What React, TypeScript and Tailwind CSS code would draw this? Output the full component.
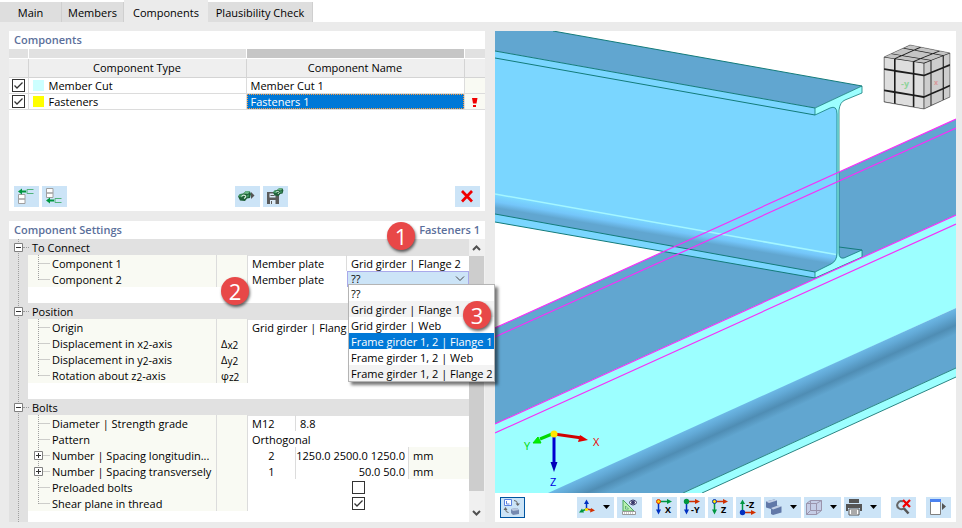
import { useState } from "react";
import type { ReactNode } from "react";

const tabs = [
  { name: "Main", width: "w-[62px]" },
  { name: "Members", width: "w-[62px]" },
  { name: "Components", width: "w-[84px]" },
  { name: "Plausibility Check", width: "w-[105px]" },
];

const componentRows = [
  { type: "Member Cut", name: "Member Cut 1", swatch: "bg-[#ccffff]", warn: false },
  { type: "Fasteners", name: "Fasteners 1", swatch: "bg-[#ffff00]", warn: true },
];

const plateOptions = [
  "??",
  "Grid girder | Flange 1",
  "Grid girder | Web",
  "Frame girder 1, 2 | Flange 1",
  "Frame girder 1, 2 | Web",
  "Frame girder 1, 2 | Flange 2",
];

type Point = [number, number];

function CheckBox({ label, initial }: { label: string; initial: boolean }) {
  const [checked, setChecked] = useState(initial);
  return (
    <label className="relative block h-[13px] w-[13px]">
      <input
        type="checkbox"
        aria-label={label}
        checked={checked}
        onChange={(e) => setChecked(e.target.checked)}
        className="block h-[13px] w-[13px] appearance-none border border-[#333] bg-white"
      />
      {checked && (
        <svg viewBox="0 0 13 13" className="pointer-events-none absolute inset-0 h-[13px] w-[13px]">
          <path d="M2.5 6.5 5 9l5.5-5.5" fill="none" stroke="#333" strokeWidth="1.3" />
        </svg>
      )}
    </label>
  );
}

function IconButton({
  label,
  children,
  active,
  menu,
}: {
  label: string;
  children: ReactNode;
  active?: boolean;
  menu?: boolean;
}) {
  return (
    <button
      type="button"
      aria-label={label}
      title={label}
      className={`flex h-[21px] shrink-0 items-center bg-[#cce4f7] hover:bg-[#b8d9f3] ${
        active ? "outline outline-1 -outline-offset-1 outline-[#0054a0]" : ""
      }`}
    >
      <svg viewBox="0 0 25 21" className="h-[21px] w-[25px]">
        {children}
      </svg>
      {menu && (
        <svg viewBox="0 0 12 21" className="h-[21px] w-3">
          <path d="M1 8h7L4.500 12z" fill="#000" />
        </svg>
      )}
    </button>
  );
}

function NutShape() {
  return (
    <g>
      <path d="M0 5.500 2 3l3-.5L8 0l4 .5L13 3l-1 4-3 .5L7 10l-5-.5z" fill="#1f5f38" />
      <path d="m5 2.500 3-2.500 4 .5L10 3z" fill="#6bb586" />
      <path d="m0 5.500 2-2.500 3 .5-1 3z" fill="#3f9460" />
      <path d="M3.500 5.500Q5 3.500 7 4.500T6 7.500" fill="none" stroke="#d5eedc" strokeWidth="1.200" />
      <path d="m9 4 2-.5v2l-2 1z" fill="#3f9460" />
    </g>
  );
}

/* Two coloured arrows from one origin, used by the view direction buttons */
function AxisIcon({
  label,
  down,
  right,
  up,
}: {
  label: string;
  down: string;
  right: string;
  up?: boolean;
}) {
  const y = up ? 15.5 : 4.5;
  return (
    <>
      {up ? (
        <>
          <path d="M6.500 15V6" stroke={down} strokeWidth="1.500" />
          <path d="M6.500 2.500 9 7H4z" fill={down} />
        </>
      ) : (
        <>
          <path d="M6.500 5v8" stroke={down} strokeWidth="1.500" />
          <path d="M6.500 17.500 9 12.500H4z" fill={down} />
        </>
      )}
      <path d={`M7 ${y}h9`} stroke={right} strokeWidth="1.500" />
      <path d={`M20 ${y}l-5-2.500v5z`} fill={right} />
      <text
        x={up ? 10 : label.length > 1 ? 11 : 13}
        y={up ? 11 : 16}
        fontSize="9"
        fontWeight="700"
        fontFamily="Open Sans, sans-serif"
      >
        {label}
      </text>
    </>
  );
}

function ComponentsPanel() {
  return (
    <section className="flex min-h-[180px] flex-col bg-white">
      <h2 className="h-[18px] px-[5px] leading-[18px] font-semibold text-[#5b6f9b]">Components</h2>
      <table className="w-full table-fixed border-collapse">
        <colgroup>
          <col className="w-[19px]" />
          <col />
          <col />
          <col className="w-[21px]" />
        </colgroup>
        <thead>
          <tr className="h-[9px] border-b border-white bg-[#e1e1e1]">
            <td className="border-r border-white" />
            <td className="border-r border-white" />
            <td className="border-r border-white bg-[#c6c6c6]" />
            <td />
          </tr>
          <tr className="h-[19px] border-b border-[#d4d4d4] bg-[#efefef]">
            <th className="border-r border-[#d4d4d4]" />
            <th className="border-r border-[#d4d4d4] p-0 font-normal">Component Type</th>
            <th className="border-r border-[#d4d4d4] p-0 font-normal">Component Name</th>
            <th />
          </tr>
        </thead>
        <tbody>
          {componentRows.map((row) => (
            <tr key={row.name} className="h-[16px] border-b border-[#dcdcdc]">
              <td className="border-r border-[#dcdcdc] p-0 pl-[3px]">
                <CheckBox label={row.type} initial />
              </td>
              <td className="border-r border-[#dcdcdc] p-0 leading-[15px]">
                <span className="flex items-center gap-[5px] pl-1">
                  <span className={`h-[11px] w-[11px] ${row.swatch}`} />
                  {row.type}
                </span>
              </td>
              <td className="border-r border-[#dcdcdc] p-0 leading-[15px]">
                {row.warn ? (
                  <div className="h-[15px] bg-[#0078d7] pl-1 text-white outline-1 -outline-offset-1 outline-dotted outline-[#ff9a3c]">
                    {row.name}
                  </div>
                ) : (
                  <div className="pl-1">{row.name}</div>
                )}
              </td>
              <td className="bg-[#f9faf3] p-0">
                {row.warn && (
                  <svg viewBox="0 0 20 15" className="h-[15px] w-5">
                    <path d="M7 4h5.500l-1 5.500h-3.500z" fill="#f00000" />
                    <path d="M8 11h3v2H8z" fill="#f00000" />
                  </svg>
                )}
              </td>
            </tr>
          ))}
        </tbody>
      </table>
      <div className="mt-auto flex justify-between px-[5px] pb-1">
        <div className="flex gap-[3px]">
          <IconButton label="Insert above">
            <path d="M4.500 8.500h6.500v4.500H4.500zM4.500 13h6.500v4.500H4.500z" fill="#fff" stroke="#a0a0a0" />
            <path d="M4 5.500 8 2.500v2h4v2H8v2z" fill="#00963f" />
            <path d="M19.500 3.500H13v4h6.500" fill="none" stroke="#4fb37a" />
          </IconButton>
          <IconButton label="Insert below">
            <path d="M4.500 2.500h6.500v4.500H4.500zM4.500 7h6.500v4.500H4.500z" fill="#fff" stroke="#a0a0a0" />
            <path d="M4 14.500 8 11.500v2h4v2H8v2z" fill="#00963f" />
            <path d="M19.500 12.500H13v4h6.500" fill="none" stroke="#4fb37a" />
          </IconButton>
        </div>
        <div className="flex gap-[3px]">
          <IconButton label="Load component">
            <g transform="translate(3 5)">
              <NutShape />
            </g>
            <path d="m16 6 3.500 3.500L16 13z" fill="#555" />
          </IconButton>
          <IconButton label="Save component">
            <path d="M4 6h10l2 2v10H4z" fill="#5a5a5a" />
            <path d="M6.500 7.500h6v4h-6zM7 14h5.500v4H7z" fill="#dcebf7" />
            <path d="M7.500 9.500h4M8.500 15v3" stroke="#5a5a5a" />
            <g transform="translate(10 2) scale(.8)">
              <NutShape />
            </g>
          </IconButton>
        </div>
        <IconButton label="Delete component">
          <path d="m7 5 10 10.500M17 5 7 15.500" stroke="#f00000" strokeWidth="2.700" />
        </IconButton>
      </div>
    </section>
  );
}

function Expander() {
  return (
    <svg viewBox="0 0 9 9" className="h-[9px] w-[9px]">
      <path d="M.5.5h8v8h-8z" fill="#fff" stroke="#808080" />
      <path d="M2 4.500h5" stroke="#333" />
    </svg>
  );
}

function GroupRow({ title }: { title: string }) {
  return (
    <div className="flex h-4 items-center pl-[5px]">
      <button type="button" aria-label={`Collapse ${title}`} className="relative">
        <Expander />
      </button>
      <span className="w-[6px] border-t border-dotted border-[#999]" />
      <h3 className="flex-1 bg-[#e1e1e1] pl-[3px]">{title}</h3>
    </div>
  );
}

function SettingRow({
  label,
  symbol,
  last,
  expandable,
  children,
}: {
  label: ReactNode;
  symbol?: ReactNode;
  last?: boolean;
  expandable?: boolean;
  children?: ReactNode;
}) {
  return (
    <div className="flex h-4">
      <div className="flex w-[189px] shrink-0 border-r border-[#dcdcdc] bg-[#f9faf3]">
        <svg viewBox="0 0 24 16" className="h-4 w-6 shrink-0">
          <path
            d={last ? "M10.500 0v9M10.500 8.500H22" : "M10.500 0v16M10.500 8.500H22"}
            fill="none"
            stroke="#a0a0a0"
            strokeDasharray="1 1"
          />
          {expandable && (
            <>
              <path d="M6.500 4.500h8v8h-8z" fill="#fff" stroke="#808080" />
              <path d="M8 8.500h5M10.500 6v5" stroke="#333" />
            </>
          )}
        </svg>
        <span className="whitespace-nowrap">{label}</span>
      </div>
      <div className="w-[31px] shrink-0 border-r border-[#dcdcdc] bg-[#f9faf3] pl-1 whitespace-nowrap">{symbol}</div>
      <div className="flex min-w-0 flex-1">{children}</div>
    </div>
  );
}

function Sub({ children }: { children: ReactNode }) {
  return <span className="relative top-px text-[10px]">{children}</span>;
}

function PlateSelect() {
  const [value, setValue] = useState("??");
  const [hovered, setHovered] = useState("Frame girder 1, 2 | Flange 1");
  return (
    <div className="relative min-w-0 flex-1">
      <select
        aria-label="Component 2 plate"
        value={value}
        onChange={(e) => setValue(e.target.value)}
        className="block h-4 w-full appearance-none border border-[#a9a9ea] bg-[#cce4f7] pl-[3px] leading-[14px]"
      >
        {plateOptions.map((o) => (
          <option key={o}>{o}</option>
        ))}
      </select>
      <svg viewBox="0 0 10 6" className="pointer-events-none absolute top-[5px] right-1 h-[6px] w-[10px]">
        <path d="m1 .5 4 4 4-4" fill="none" stroke="#444" />
      </svg>
      <ul
        role="listbox"
        aria-label="Plates"
        className="absolute top-[13px] left-px z-10 w-[147px] border border-[#b4b4b4] bg-white shadow-[3px_3px_3px_#0008]"
      >
        {plateOptions.map((o, i) => (
          <li
            key={o}
            role="option"
            aria-selected={o === value}
            onMouseEnter={() => setHovered(o)}
            onClick={() => setValue(o)}
            className={`h-4 pl-[2px] whitespace-nowrap ${
              o === hovered ? "bg-[#0078d7] text-white" : i % 2 ? "bg-[#f3f3f3]" : "bg-white"
            }`}
          >
            {o}
          </li>
        ))}
      </ul>
    </div>
  );
}

function SettingsPanel() {
  return (
    <section className="flex flex-1 flex-col bg-white">
      <div className="flex h-[18px] justify-between px-[5px] leading-[18px] font-semibold text-[#5b6f9b]">
        <h2>Component Settings</h2>
        <span>Fasteners 1</span>
      </div>
      <div className="flex flex-1">
        <div className="relative flex min-w-0 flex-1 flex-col gap-4 bg-[linear-gradient(to_right,#e1e1e1_19px,#fff_19px)] leading-[17px]">
          <div className="absolute inset-y-0 left-[9px] border-l border-dotted border-[#a0a0a0]" />
          <div>
            <div className="bg-[#e1e1e1]">
              <GroupRow title="To Connect" />
            </div>
            <div className="pl-[19px]">
              <SettingRow label="Component 1">
                <span className="w-[99px] shrink-0 border-r border-[#dcdcdc] pl-1">Member plate</span>
                <span className="pl-1 whitespace-nowrap">Grid girder | Flange 2</span>
              </SettingRow>
              <SettingRow label="Component 2" last>
                <span className="w-[99px] shrink-0 pl-1">Member plate</span>
                <PlateSelect />
              </SettingRow>
            </div>
          </div>
          <div>
            <div className="bg-[#e1e1e1]">
              <GroupRow title="Position" />
            </div>
            <div className="pl-[19px]">
              <SettingRow label="Origin">
                <span className="w-[99px] overflow-hidden pl-1 whitespace-nowrap">Grid girder | Flange 2</span>
              </SettingRow>
              <SettingRow label={<>Displacement in x<Sub>2</Sub>-axis</>} symbol={<>Δ<Sub>x2</Sub></>} />
              <SettingRow label={<>Displacement in y<Sub>2</Sub>-axis</>} symbol={<>Δ<Sub>y2</Sub></>} />
              <SettingRow label={<>Rotation about z<Sub>2</Sub>-axis</>} symbol={<>φ<Sub>z2</Sub></>} last />
            </div>
          </div>
          <div>
            <div className="bg-[#e1e1e1]">
              <GroupRow title="Bolts" />
            </div>
            <div className="pl-[19px]">
              <SettingRow label="Diameter | Strength grade">
                <span className="w-12 border-r border-[#dcdcdc] pl-1">M12</span>
                <span className="pl-1">8.8</span>
              </SettingRow>
              <SettingRow label="Pattern">
                <span className="pl-1">Orthogonal</span>
              </SettingRow>
              <SettingRow label="Number | Spacing longitudin..." expandable>
                <span className="w-12 shrink-0 border-r border-[#dcdcdc] text-center">2</span>
                <span className="w-[113px] shrink-0 border-r border-[#dcdcdc] pr-[3px] text-right whitespace-nowrap">
                  1250.0 2500.0 1250.0
                </span>
                <span className="flex-1 bg-[#f9faf3] pl-1">mm</span>
              </SettingRow>
              <SettingRow label="Number | Spacing transversely" expandable>
                <span className="w-12 shrink-0 border-r border-[#dcdcdc] text-center">1</span>
                <span className="w-[113px] shrink-0 border-r border-[#dcdcdc] pr-[3px] text-right">50.0 50.0</span>
                <span className="flex-1 bg-[#f9faf3] pl-1">mm</span>
              </SettingRow>
              <SettingRow label="Preloaded bolts">
                <div className="flex flex-1 items-center justify-center">
                  <CheckBox label="Preloaded bolts" initial={false} />
                </div>
              </SettingRow>
              <SettingRow label="Shear plane in thread" last>
                <div className="flex flex-1 items-center justify-center">
                  <CheckBox label="Shear plane in thread" initial />
                </div>
              </SettingRow>
            </div>
          </div>
        </div>
        <div className="flex w-4 shrink-0 flex-col items-center bg-[#f0f0f0]">
          <svg viewBox="0 0 16 17" className="h-[17px] w-4">
            <path d="m4 11 3.500-3.500L11 11" fill="none" stroke="#505050" strokeWidth="2" />
          </svg>
          <div className="mr-px mb-[14px] w-[15px] flex-1 bg-[#cdcdcd]" />
          <svg viewBox="0 0 16 17" className="h-[17px] w-4">
            <path d="m4 6 3.500 3.500L11 6" fill="none" stroke="#505050" strokeWidth="2" />
          </svg>
        </div>
      </div>
    </section>
  );
}

const cubeFaces: { quad: [Point, Point, Point, Point]; fill: string }[] = [
  { quad: [[884, 57], [910, 45], [950, 53], [924, 63]], fill: "#c4c4c4" },
  { quad: [[884, 57], [924, 63], [924, 109], [884, 102]], fill: "#dedede" },
  { quad: [[924, 63], [950, 53], [950, 97], [924, 109]], fill: "#cdcdcd" },
];

const cubeSteps: [number, number][] = [
  [0.01, 0.25],
  [0.29, 0.72],
  [0.76, 0.99],
];

function onQuad(q: Point[], u: number, v: number) {
  const at = (k: number) =>
    (1 - u) * (1 - v) * q[0][k] + u * (1 - v) * q[1][k] + u * v * q[2][k] + (1 - u) * v * q[3][k];
  return `${at(0).toFixed(1)},${at(1).toFixed(1)}`;
}

function ViewCube() {
  return (
    <g>
      <path d="M884 57 910 45l40 8v44l-26 12-40-7z" fill="#1c1c1c" stroke="#555" strokeWidth=".5" strokeLinejoin="round" />
      {cubeFaces.map((face) =>
        cubeSteps.map(([u0, u1]) =>
          cubeSteps.map(([v0, v1]) => (
            <polygon
              key={`${face.fill}${u0}${v0}`}
              points={[
                onQuad(face.quad, u0, v0),
                onQuad(face.quad, u1, v0),
                onQuad(face.quad, u1, v1),
                onQuad(face.quad, u0, v1),
              ].join(" ")}
              fill={face.fill}
            />
          ))
        )
      )}
      <text x="901" y="87" fontSize="9" fontWeight="700" fill="#8fd39a">-y</text>
      <text x="934" y="85" fontSize="7" fontWeight="700" fill="#d99a9a">x</text>
    </g>
  );
}

function ModelView() {
  return (
    <svg viewBox="495 31 461 462" className="block h-auto w-full bg-white" role="img" aria-label="Model view">
      <defs>
        <linearGradient id="frameFillet" gradientUnits="userSpaceOnUse" x1="720" y1="415" x2="730" y2="437">
          <stop offset="0" stopColor="#6cb8e6" />
          <stop offset="0.25" stopColor="#62a9d6" />
          <stop offset="0.65" stopColor="#4f8db4" />
          <stop offset="1" stopColor="#61a6d0" />
        </linearGradient>
        <linearGradient id="gridFillet" gradientUnits="userSpaceOnUse" x1="600" y1="213" x2="598" y2="225">
          <stop offset="0" stopColor="#7ad6ff" />
          <stop offset="0.5" stopColor="#74c6fa" />
          <stop offset="1" stopColor="#61a6d0" />
        </linearGradient>
      </defs>

      {/* frame girder */}
      <path d="M495 328 956 119v96L495 424z" fill="#61a6d0" />
      <path d="M495 424 956 215v93L552 493h-57z" fill="#9cffff" />
      <path d="M548 493 956 308v60L683 493z" fill="url(#frameFillet)" />
      <path d="M683 493 956 368v9L702 493z" fill="#9cffff" />
      <path d="M683 493 956 368M702 493 956 377" stroke="#2b8584" fill="none" />

      {/* grid girder */}
      <path d="M495 31h58l309 55-47 22L495 51z" fill="#61a6d0" />
      <path d="M495 51 815 108l22-2v149l-22 23L495 222z" fill="#7ad6ff" />
      <path d="M495 195 836 255v5l-5 4-16 8L495 214z" fill="url(#gridFillet)" />
      <path d="M495 194 836 254.500" stroke="#a4f6ff" strokeWidth="1.500" />
      <path d="M839 247 862 250 842 260z" fill="#61a6d0" />
      <path
        d="M815 108 862 86v7l-17 7q-5 2-6 10v143q0 6 5 5l18-8v7L815 278v-6l16-8q6-3 6-11V114q0-9-7-6l-15 7z"
        fill="#9cffff"
        stroke="#137b7a"
        strokeWidth="0.800"
      />
      <path
        d="M553 31 862 86M495 51 815 108M495 58 815 115M495 214 815 272M495 222 815 278M839 247 862 250"
        stroke="#137b7a"
        fill="none"
      />

      <g stroke="#f72ff7" strokeWidth="1.200">
        <path d="M495 328 956 119M495 337 956 128M495 424 956 215M495 433 956 224" />
      </g>

      <ViewCube />

      {/* coordinate axes */}
      <path d="M554 434 582 438" stroke="#d00000" strokeWidth="3" />
      <path d="m588 440-10 2 2-7z" fill="#e00000" />
      <path d="M552 434 540 439" stroke="#00d800" strokeWidth="3" />
      <path d="m533 443 5-6 3 6z" fill="#00f000" stroke="#00e000" />
      <path d="M554 436v27" stroke="#0000d0" strokeWidth="3" />
      <path d="m554 472-3.500-10h7z" fill="#0000b8" />
      <circle cx="554" cy="434" r="3.500" fill="#ffe600" />
      <g fontFamily="Open Sans, sans-serif" fontSize="11">
        <text x="593" y="446" fill="#f00000">X</text>
        <text x="524" y="450" fill="#00d800">Y</text>
        <text x="550" y="486" fill="#0000e0">Z</text>
      </g>
    </svg>
  );
}

function ViewToolbar() {
  return (
    <div className="flex h-[29px] items-center gap-[10px] bg-white px-[5px]">
      <div className="mr-auto flex">
        <IconButton label="Synchronize view" active>
          <path d="M4.500 2.500h7v6h-7z" fill="#fff" stroke="#5b82e0" />
          <path d="M6.500 4v3h3" fill="none" stroke="#5b82e0" />
          <path d="M14 3.500q3.500 0 3.500 3.500M5.500 12q0 3.500 3 3.500" fill="none" stroke="#666" />
          <path d="M15.500 6.500h4.500l-2.200 2.500zM3.500 13h4l-2-3z" fill="#666" />
          <path d="m11 12 6-1 2 2v4l-6 1-2-2z" fill="#7589b0" />
          <path d="m11 12 6-1 2 2-6 1z" fill="#b9c7de" />
        </IconButton>
      </div>
      <div className="flex gap-[3px]">
        <IconButton label="Axes" menu>
          <path d="M9.500 12V6" stroke="#0030c0" strokeWidth="1.500" />
          <path d="M9.500 2.500 12 7H7z" fill="#0030c0" />
          <path d="M9.500 12 5 14" stroke="#00963f" strokeWidth="1.500" />
          <path d="m2 15.500 3-4 2 4z" fill="#00963f" />
          <path d="m9.500 12 5 1" stroke="#d03000" strokeWidth="1.500" />
          <path d="m18 13.500-5 2 1-4.500z" fill="#d03000" />
          <circle cx="9.500" cy="12.500" r="1.600" fill="#ffe000" />
        </IconButton>
        <IconButton label="Measure">
          <path d="M6 3v11h11z" fill="#b9f0b0" stroke="#4aa860" />
          <path d="M8.500 9v3h3z" fill="#e8f6ff" stroke="#4aa860" strokeWidth=".8" />
          <path d="M5.500 14.500h13v3h-13z" fill="#fff" stroke="#999" />
          <path d="M7.500 15v2M9.500 15v2M11.500 15v2M13.500 15v2M15.500 15v2" stroke="#aaa" strokeWidth=".6" />
          <path d="M12 5.500q4-5 8 0-4 5-8 0z" fill="#fff" stroke="#39396b" />
          <circle cx="16" cy="5.500" r="2" fill="#39396b" />
        </IconButton>
      </div>
      <div className="flex gap-[3px]">
        <IconButton label="View in X">
          <AxisIcon label="X" down="#0030c0" right="#00963f" />
          <circle cx="6.500" cy="4.500" r="2" fill="#ffd000" stroke="#e03000" />
        </IconButton>
        <IconButton label="View against Y">
          <AxisIcon label="-Y" down="#0030c0" right="#d03000" />
          <circle cx="6.500" cy="4.500" r="2.700" fill="#00963f" />
        </IconButton>
        <IconButton label="View in Z">
          <AxisIcon label="Z" down="#00963f" right="#d03000" />
          <circle cx="6.500" cy="4.500" r="2" fill="#ffe000" stroke="#0030c0" />
        </IconButton>
        <IconButton label="View against Z">
          <AxisIcon label="-Z" down="#00963f" right="#d03000" up />
          <circle cx="6.500" cy="15.500" r="2.700" fill="#0030c0" />
        </IconButton>
        <IconButton label="Display mode" menu>
          <path d="m2 4.500 8-2 3 1v5l4.500 1v6L9 18l-2-1v-5l-5-1.500z" fill="#6178a8" />
          <path d="m2 4.500 8-2 3 1-8 2.500zM7 11l7-2.500 3.500 1L9 12.500z" fill="#c3d0e6" />
        </IconButton>
        <IconButton label="Wireframe" menu>
          <path d="M2.500 6.500 6.500 3.500h11v10l-5 4h-10z" fill="#c5cde6" />
          <path
            d="M2.500 6.500h10v11h-10zl4-3h11l-5 3M17.500 3.500v10l-5 4M6.500 3.500v10h11M6.500 13.500l-4 4"
            fill="none"
            stroke="#9a94ac"
          />
        </IconButton>
        <IconButton label="Print" menu>
          <path d="M5 2h10v4H5zM2 7h16v7h-2v-3H4v3H2z" fill="#555" />
          <path d="M5 12h10v6H5z" fill="#fff" stroke="#555" />
          <path d="M7 14h6M7 16h6" stroke="#555" />
        </IconButton>
      </div>
      <IconButton label="Clear selection">
        <path d="M12 4.500a4 4 0 1 0 1.500 6" fill="none" stroke="#666" strokeWidth="2" />
        <path d="m13 11.500 4.500 5" stroke="#555" strokeWidth="2.500" />
        <path d="m12 3 7 7M19 3l-7 7" stroke="#f00000" strokeWidth="2.300" />
      </IconButton>
      <IconButton label="Show panel">
        <path d="M4.500 2.500h10v15h-10z" fill="#fff" stroke="#808080" />
        <path d="M4 2h11v3H4z" fill="#4b82f0" />
        <path d="m16 6 4 3.500-4 3.500z" fill="#555" />
      </IconButton>
    </div>
  );
}

function Badge({ n, place }: { n: number; place: string }) {
  return (
    <span
      className={`absolute z-20 flex h-7 w-7 items-center justify-center rounded-full bg-[#e84848] text-[22px] leading-none text-white shadow-[1px_2px_3px_#0009] ${place}`}
    >
      {n}
    </span>
  );
}

export default function App() {
  const [tab, setTab] = useState("Components");
  return (
    <div className="flex min-h-screen flex-col bg-[#ebebeb] font-['Open_Sans',sans-serif] text-[11px] leading-4 text-black">
      <nav role="tablist" className="flex h-[22px] items-end bg-white">
        {tabs.map((t) => (
          <button
            key={t.name}
            type="button"
            role="tab"
            aria-selected={t.name === tab}
            onClick={() => setTab(t.name)}
            className={`whitespace-nowrap ${t.width} ${
              t.name === tab ? "h-[22px] bg-[#ebebeb] pt-1" : "h-5 border-r border-[#cfcfcf] bg-[#dedede] pt-[2px]"
            }`}
          >
            {t.name}
          </button>
        ))}
      </nav>
      <main className="flex flex-1 items-start gap-[10px] pt-[9px] pr-[6px] pb-[6px] pl-[9px]">
        <div className="relative flex w-[476px] shrink-0 flex-col gap-[10px] self-stretch">
          <ComponentsPanel />
          <SettingsPanel />
          <Badge n={1} place="top-[191px] left-[378px]" />
          <Badge n={2} place="top-[246px] left-[212px]" />
          <Badge n={3} place="top-[270px] left-[454px]" />
        </div>
        <div className="min-w-0 flex-1">
          <ModelView />
          <ViewToolbar />
        </div>
      </main>
    </div>
  );
}
